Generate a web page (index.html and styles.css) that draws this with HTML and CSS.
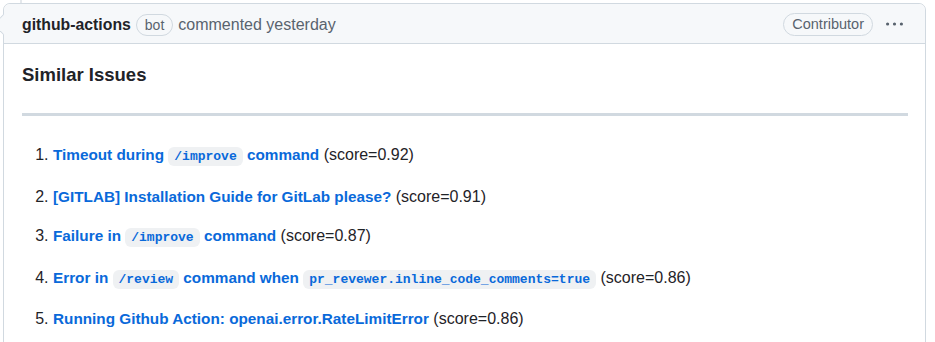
FILE: index.html
```html
<!DOCTYPE html>
<html lang="en">
<head>
    <meta charset="UTF-8">
    <title>Similar Issues comment</title>
    <link rel="stylesheet" href="styles.css">
</head>
<body>
    <div class="timeline">
        <div class="timeline-line"></div>
        <div class="comment">
            <div class="comment-header">
                <a class="author" href="#">github-actions</a>
                <span class="label">bot</span>
                <span class="meta">commented yesterday</span>
                <span class="spacer"></span>
                <span class="label role">Contributor</span>
                <svg class="kebab" viewBox="0 0 16 16" width="17" height="17" aria-hidden="true">
                    <path d="M8 9a1.5 1.5 0 1 0 0-3 1.5 1.5 0 0 0 0 3ZM1.5 9a1.5 1.5 0 1 0 0-3 1.5 1.5 0 0 0 0 3Zm13 0a1.5 1.5 0 1 0 0-3 1.5 1.5 0 0 0 0 3Z"></path>
                </svg>
            </div>
            <div class="comment-body">
                <h3>Similar Issues</h3>
                <hr>
                <ol class="issues">
                    <li><a href="#">Timeout during <code>/improve</code> command</a> (score=0.92)</li>
                    <li><a href="#">[GITLAB] Installation Guide for GitLab please?</a> (score=0.91)</li>
                    <li><a href="#">Failure in <code>/improve</code> command</a> (score=0.87)</li>
                    <li><a href="#">Error in <code>/review</code> command when <code>pr_revewer.inline_code_comments=true</code></a> (score=0.86)</li>
                    <li><a href="#">Running Github Action: openai.error.RateLimitError</a> (score=0.86)</li>
                </ol>
            </div>
        </div>
    </div>
</body>
</html>
```

FILE: styles.css
```css
body {
    margin: 0;
    background-color: #fff;
    font-family: "Liberation Sans", Arial, sans-serif;
    font-size: 16px;
    color: #1f2328;
}
.timeline {
    padding: 0 9px 20px 3px;
}
.timeline-line {
    width: 2px;
    height: 3px;
    margin-left: 17px;
    background-color: #e4e8ec;
}
.comment {
    position: relative;
    border: 1px solid #d1d9e0;
    border-radius: 7px;
}
.comment:before {
    content: "";
    position: absolute;
    top: 13px;
    left: -8px;
    width: 14px;
    height: 14px;
    background-color: #f6f8fa;
    border-left: 1px solid #d1d9e0;
    border-bottom: 1px solid #d1d9e0;
    transform: rotate(45deg);
}
.comment-header {
    display: flex;
    align-items: center;
    box-sizing: border-box;
    height: 40px;
    padding: 2px 22px 0 18px;
    background-color: #f6f8fa;
    border-bottom: 1px solid #d1d9e0;
    border-radius: 7px 7px 0 0;
}
.author {
    color: #1f2328;
    font-weight: bold;
    text-decoration: none;
    font-size: 15.8px;
}
.label {
    display: inline-block;
    margin-left: 5px;
    padding: 0 8px;
    line-height: 20px;
    font-size: 14px;
    color: #59636e;
    border: 1px solid #d1d9e0;
    border-radius: 12px;
}
.meta {
    margin-left: 5px;
    color: #59636e;
}
.spacer {
    flex: 1;
}
.role {
    padding: 0 8px;
    line-height: 21px;
    font-size: 14.5px;
}
.kebab {
    margin-left: 13px;
    fill: #59636e;
}
.comment-body {
    padding: 18px 17px 30px 18px;
}
.comment-body h3 {
    margin: 0;
    font-size: 18.5px;
    line-height: 25px;
    font-weight: bold;
}
.comment-body hr {
    height: 3px;
    margin: 26px 0 0;
    padding: 0;
    border: 0;
    background-color: #d1d9e0;
}
.issues {
    margin: 27px 0 0;
    padding-left: 31px;
}
.issues li {
    line-height: 24px;
}
.issues li + li {
    margin-top: 15.5px;
}
.issues a {
    color: #0969da;
    font-weight: bold;
    text-decoration: none;
    font-size: 15.3px;
}
.issues code {
    padding: 2px 6px;
    font-family: "Liberation Mono", monospace;
    font-size: 13px;
    background-color: #eff1f3;
    border-radius: 6px;
}
```
